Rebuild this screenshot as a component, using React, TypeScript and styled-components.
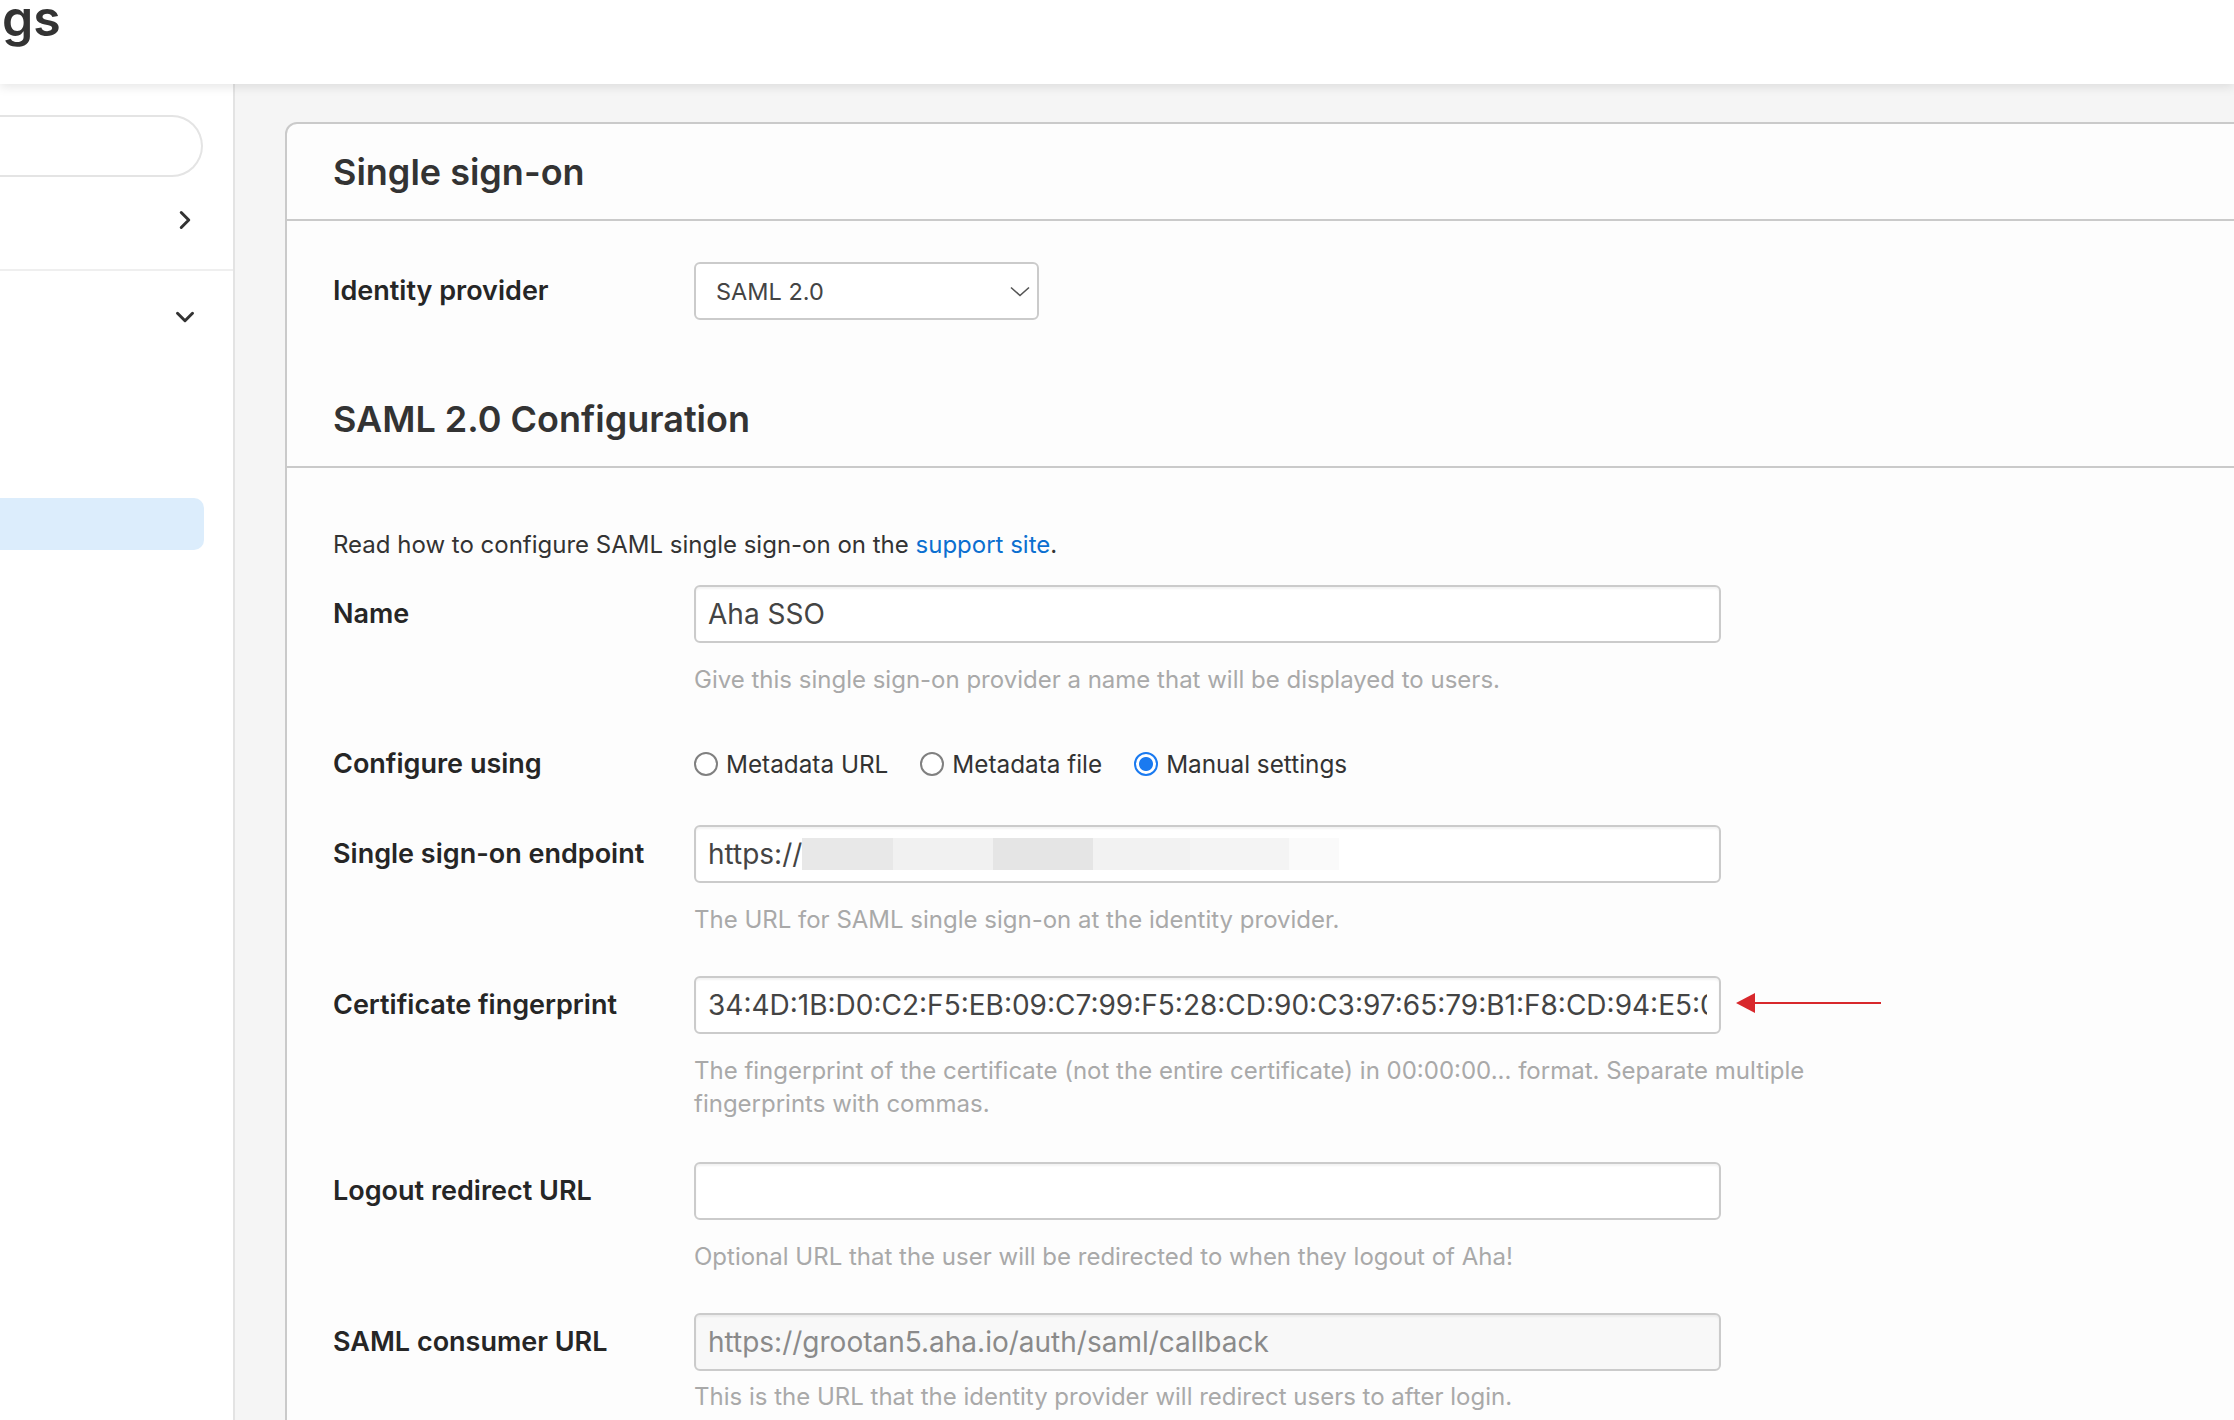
import styled, { createGlobalStyle } from 'styled-components';
import { ChevronDown, ChevronRight } from 'lucide-react';

const GlobalStyle = createGlobalStyle`
  html, body {
    margin: 0;
    padding: 0;
    height: 100%;
    overflow: hidden;
    background: #f5f5f5;
    font-family: Inter, "Noto Sans", "Liberation Sans", sans-serif;
    color: #333;
  }
  #root {
    height: 100%;
  }
`;

const Page = styled.div`
  height: 100vh;
  display: flex;
  flex-direction: column;
`;

const TopBar = styled.header`
  position: relative;
  z-index: 2;
  flex: 0 0 84px;
  background: #fff;
  box-shadow: 0 3px 10px rgba(0, 0, 0, 0.1);
  overflow: hidden;
`;

const PageTitle = styled.h1`
  margin: 0 0 0 2px;
  font-size: 50px;
  line-height: 36px;
  font-weight: 600;
  color: #333;
`;

const Body = styled.div`
  flex: 1;
  min-height: 0;
  display: flex;
`;

const Sidebar = styled.nav`
  flex: 0 0 233px;
  background: #fff;
  border-right: 2px solid #e3e3e3;
  display: flex;
  flex-direction: column;
`;

const SearchPill = styled.div`
  margin-top: 31px;
  width: 203px;
  height: 62px;
  box-sizing: border-box;
  border: 2px solid #e4e4e4;
  border-left: none;
  border-radius: 0 31px 31px 0;
`;

const NavRow = styled.div<{ $lift?: number }>`
  height: 92px;
  box-sizing: border-box;
  padding-bottom: ${p => p.$lift ?? 0}px;
  display: flex;
  align-items: center;
  justify-content: flex-end;
  padding-right: 33px;
  color: #333;
`;

const SideDivider = styled.div`
  height: 2px;
  background: #efefef;
`;

const SelectedItem = styled.div`
  margin-top: 135px;
  width: 204px;
  height: 52px;
  background: #dcedfc;
  border-radius: 0 10px 10px 0;
`;

const Main = styled.main`
  flex: 1;
  min-width: 0;
  overflow: hidden;
  background: #f5f5f5;
  padding: 38px 0 0 50px;
`;

const Panel = styled.section`
  width: 2100px;
  min-height: 1400px;
  background: #fdfdfd;
  border: 2px solid #cacaca;
  border-radius: 12px 12px 0 0;
`;

const PanelHeader = styled.h2`
  margin: 0;
  height: 95px;
  display: flex;
  align-items: center;
  padding: 0 46px;
  border-bottom: 2px solid #cacaca;
  font-size: 36px;
  font-weight: 600;
  color: #333;
`;

const PanelSection = styled.div<{ $pad: string }>`
  padding: ${p => p.$pad};
`;

const Intro = styled.p`
  margin: 0 0 26px;
  font-size: 24px;
  line-height: 33px;
  color: #333;
  transform: translateY(2px);
`;

const SupportLink = styled.a`
  color: #0b6fd0;
  text-decoration: none;
`;

const FormRow = styled.div<{ $gap?: number }>`
  display: grid;
  grid-template-columns: 361px 1170px;
  margin-bottom: ${p => p.$gap ?? 40}px;
`;

const Label = styled.label`
  font-size: 27px;
  line-height: 58px;
  font-weight: 600;
  color: #262626;
  white-space: nowrap;
`;

const Field = styled.div`
  display: flex;
  flex-direction: column;
`;

const InputLine = styled.div`
  position: relative;
  display: flex;
  align-items: center;
`;

const TextInput = styled.input<{ $muted?: boolean }>`
  flex: 0 0 auto;
  width: 1027px;
  height: 58px;
  box-sizing: border-box;
  padding: 0 12px;
  border: 2px solid #cbcbcb;
  border-radius: 6px;
  box-shadow: inset 0 2px 2px rgba(0, 0, 0, 0.05);
  background: ${p => (p.$muted ? '#f8f8f8' : '#fff')};
  color: ${p => (p.$muted ? '#8a8a8a' : '#444')};
  font-family: Inter, "Noto Sans", "Liberation Sans", sans-serif;
  font-size: 28px;
  outline: none;
`;

const Redacted = styled.span`
  position: absolute;
  left: 108px;
  top: 13px;
  width: 537px;
  height: 32px;
  background: linear-gradient(
    to right,
    #e8e8e8 0 91px,
    #f1f1f1 91px 191px,
    #e5e5e5 191px 291px,
    #f2f2f2 291px 388px,
    #f4f4f4 388px 487px,
    #fafafa 487px 537px
  );
`;

const Help = styled.p<{ $top?: number }>`
  margin: ${p => p.$top ?? 20}px 0 0;
  font-size: 24px;
  line-height: 33px;
  color: #a9a9a9;
`;

const SelectBox = styled.div`
  width: 345px;
  height: 58px;
  box-sizing: border-box;
  padding: 0 7px 0 20px;
  display: flex;
  align-items: center;
  justify-content: space-between;
  border: 2px solid #cbcbcb;
  border-radius: 6px;
  background: #fff;
  font-size: 23.5px;
  color: #444;
`;

const RadioGroup = styled.div`
  height: 58px;
  display: flex;
  align-items: center;
  gap: 32px;
`;

const RadioOption = styled.label`
  display: flex;
  align-items: center;
  gap: 8px;
  font-size: 24.3px;
  color: #333;
`;

const RadioDot = styled.span<{ $checked?: boolean }>`
  width: 24px;
  height: 24px;
  box-sizing: border-box;
  border-radius: 50%;
  border: 2px solid ${p => (p.$checked ? '#1a7af0' : '#808080')};
  background: ${p =>
    p.$checked ? 'radial-gradient(circle, #1a7af0 0 6.5px, #fff 7.5px)' : '#fff'};
`;

const Arrow = () => (
  <svg width="146" height="22" viewBox="0 0 146 22" style={{ flex: '0 0 auto', marginLeft: 15, marginTop: -4 }}>
    <line x1="16" y1="11" x2="145" y2="11" stroke="#d8282c" strokeWidth="2" />
    <polygon points="0,11 19,1 19,21" fill="#d8282c" />
  </svg>
);

const SelectChevron = () => (
  <svg width="20" height="11" viewBox="0 0 20 11">
    <polyline points="1,1.5 10,9.5 19,1.5" fill="none" stroke="#555" strokeWidth="1.6" />
  </svg>
);

const radios = [
  { label: 'Metadata URL', checked: false },
  { label: 'Metadata file', checked: false },
  { label: 'Manual settings', checked: true },
];

export default function App() {
  return (
    <Page>
      <GlobalStyle />
      <TopBar>
        <PageTitle>gs</PageTitle>
      </TopBar>
      <Body>
        <Sidebar>
          <SearchPill />
          <NavRow $lift={6}>
            <ChevronRight size={30} strokeWidth={2.4} />
          </NavRow>
          <SideDivider />
          <NavRow>
            <ChevronDown size={30} strokeWidth={2.4} />
          </NavRow>
          <SelectedItem />
        </Sidebar>
        <Main>
          <Panel>
            <PanelHeader>Single sign-on</PanelHeader>
            <PanelSection $pad="41px 46px 51px">
              <FormRow $gap={0}>
                <Label>Identity provider</Label>
                <SelectBox>
                  SAML 2.0
                  <SelectChevron />
                </SelectBox>
              </FormRow>
            </PanelSection>

            <PanelHeader>SAML 2.0 Configuration</PanelHeader>
            <PanelSection $pad="58px 46px 40px">
              <Intro>
                Read how to configure SAML single sign-on on the{' '}
                <SupportLink href="#">support site</SupportLink>.
              </Intro>

              <FormRow $gap={39}>
                <Label>Name</Label>
                <Field>
                  <TextInput readOnly value="Aha SSO" />
                  <Help>Give this single sign-on provider a name that will be displayed to users.</Help>
                </Field>
              </FormRow>

              <FormRow $gap={32}>
                <Label>Configure using</Label>
                <RadioGroup>
                  {radios.map(r => (
                    <RadioOption key={r.label}>
                      <RadioDot $checked={r.checked} />
                      {r.label}
                    </RadioOption>
                  ))}
                </RadioGroup>
              </FormRow>

              <FormRow>
                <Label>Single sign-on endpoint</Label>
                <Field>
                  <InputLine>
                    <TextInput readOnly value="https://" />
                    <Redacted />
                  </InputLine>
                  <Help>The URL for SAML single sign-on at the identity provider.</Help>
                </Field>
              </FormRow>

              <FormRow $gap={42}>
                <Label>Certificate fingerprint</Label>
                <Field>
                  <InputLine>
                    <TextInput
                      readOnly
                      value="34:4D:1B:D0:C2:F5:EB:09:C7:99:F5:28:CD:90:C3:97:65:79:B1:F8:CD:94:E5:0C:7A"
                    />
                    <Arrow />
                  </InputLine>
                  <Help>
                    The fingerprint of the certificate (not the entire certificate) in 00:00:00... format. Separate
                    multiple fingerprints with commas.
                  </Help>
                </Field>
              </FormRow>

              <FormRow>
                <Label>Logout redirect URL</Label>
                <Field>
                  <TextInput readOnly value="" />
                  <Help>Optional URL that the user will be redirected to when they logout of Aha!</Help>
                </Field>
              </FormRow>

              <FormRow>
                <Label>SAML consumer URL</Label>
                <Field>
                  <TextInput readOnly $muted value="https://grootan5.aha.io/auth/saml/callback" />
                  <Help $top={9}>This is the URL that the identity provider will redirect users to after login.</Help>
                </Field>
              </FormRow>
            </PanelSection>
          </Panel>
        </Main>
      </Body>
    </Page>
  );
}
